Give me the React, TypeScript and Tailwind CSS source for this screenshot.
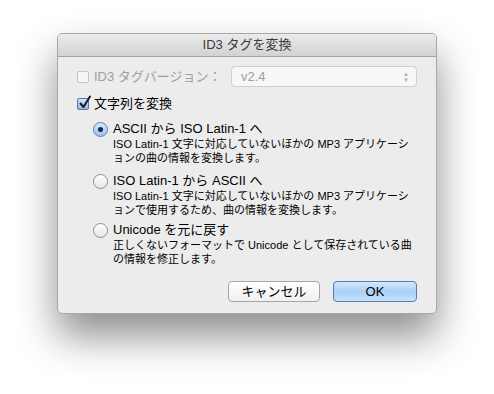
import React from 'react';

const font = { fontFamily: '"Liberation Sans", "Noto Sans CJK JP", sans-serif' };

function Radio({ on }: { on?: boolean }) {
  return (
    <span
      className={`w-[15px] h-[15px] rounded-full border shrink-0 flex items-center justify-center ${
        on
          ? 'border-[#5a7fb0] bg-gradient-to-b from-[#d7e8fb] to-[#9cc3ee]'
          : 'border-[#8e8e8e] bg-gradient-to-b from-white to-[#e6e6e6]'
      }`}
    >
      {on && <span className="w-[5px] h-[5px] rounded-full bg-[#1d2b3d]" />}
    </span>
  );
}

function Option({ on, title, lines, className = '' }: { on?: boolean; title: string; lines: string[]; className?: string }) {
  return (
    <div className={`flex flex-col ${className}`}>
      <div className="flex items-center gap-[5px] h-[16px]">
        <Radio on={on} />
        <span className="text-[13px] text-black leading-[16px]">{title}</span>
      </div>
      <div className="pl-[20px] text-[11px] leading-[14px] text-black">
        {lines.map((l) => (
          <div key={l}>{l}</div>
        ))}
      </div>
    </div>
  );
}

export default function App() {
  return (
    <div className="w-[494px] h-[394px] bg-white pt-[33px] pl-[57px]" style={font}>
      <div className="w-[380px] h-[281px] rounded-[5px] border border-[#a8a8a8] bg-[#ececec] shadow-[0_22px_40px_rgba(0,0,0,0.45)] flex flex-col overflow-hidden">
        {/* title bar */}
        <div className="h-[23px] shrink-0 bg-gradient-to-b from-[#ebebeb] to-[#d2d2d2] border-b border-[#a3a3a3] flex items-center justify-center text-[13px] text-[#3a3a3a]">
          ID3 タグを変換
        </div>

        <div className="flex flex-col px-[19px] pt-[9px]">
          {/* version row */}
          <div className="flex items-center h-[21px]">
            <span className="w-[12px] h-[12px] rounded-[2px] border border-[#c4c4c4] bg-[#f6f6f6]" />
            <span className="ml-[5px] text-[13px] text-[#a0a0a0]">ID3 タグバージョン：</span>
            <div className="ml-auto w-[186px] h-[21px] rounded-[4px] border border-[#cfcfcf] bg-[#f7f7f7] flex items-center pl-[9px] pr-[7px] text-[13px] text-[#a0a0a0]">
              <span>v2.4</span>
              <span className="ml-auto flex flex-col items-center text-[6px] leading-[6px] text-[#b0b0b0]">
                <span>▲</span>
                <span>▼</span>
              </span>
            </div>
          </div>

          {/* convert strings */}
          <div className="flex items-center h-[16px] mt-[9px]">
            <span className="w-[12px] h-[12px] rounded-[2px] border border-[#5478a8] bg-gradient-to-b from-[#d2e4f9] to-[#8fb8e8] relative">
              <svg className="absolute left-[0px] top-[-4px]" width="14" height="15" viewBox="0 0 14 15">
                <path d="M2.5 8.5 L5.5 12 L12 1.5" fill="none" stroke="#1a1a1a" strokeWidth="2" strokeLinecap="round" strokeLinejoin="round" />
              </svg>
            </span>
            <span className="ml-[5px] text-[13px] text-black">文字列を変換</span>
          </div>

          <div className="flex flex-col pl-[16px] mt-[9px]">
            <Option
              on
              title="ASCII から ISO Latin-1 へ"
              lines={['ISO Latin-1 文字に対応していないほかの MP3 アプリケーシ', 'ョンの曲の情報を変換します。']}
            />
            <Option
              className="mt-[8px]"
              title="ISO Latin-1 から ASCII へ"
              lines={['ISO Latin-1 文字に対応していないほかの MP3 アプリケーシ', 'ョンで使用するため、曲の情報を変換します。']}
            />
            <Option
              className="mt-[5px]"
              title="Unicode を元に戻す"
              lines={['正しくないフォーマットで Unicode として保存されている曲', 'の情報を修正します。']}
            />
          </div>
        </div>

        {/* buttons */}
        <div className="mt-auto mb-[11px] mr-[19px] flex justify-end gap-[13px]">
          <button className="w-[92px] h-[21px] rounded-[4px] border border-[#a6a6a6] bg-gradient-to-b from-white to-[#f0f0f0] text-[13px] text-black leading-none">
            キャンセル
          </button>
          <button className="w-[84px] h-[21px] rounded-[4px] border border-[#5a7bb0] bg-gradient-to-b from-[#d4e7fb] via-[#a9d0f5] to-[#c6e2fb] text-[13px] text-black leading-none">
            OK
          </button>
        </div>
      </div>
    </div>
  );
}
